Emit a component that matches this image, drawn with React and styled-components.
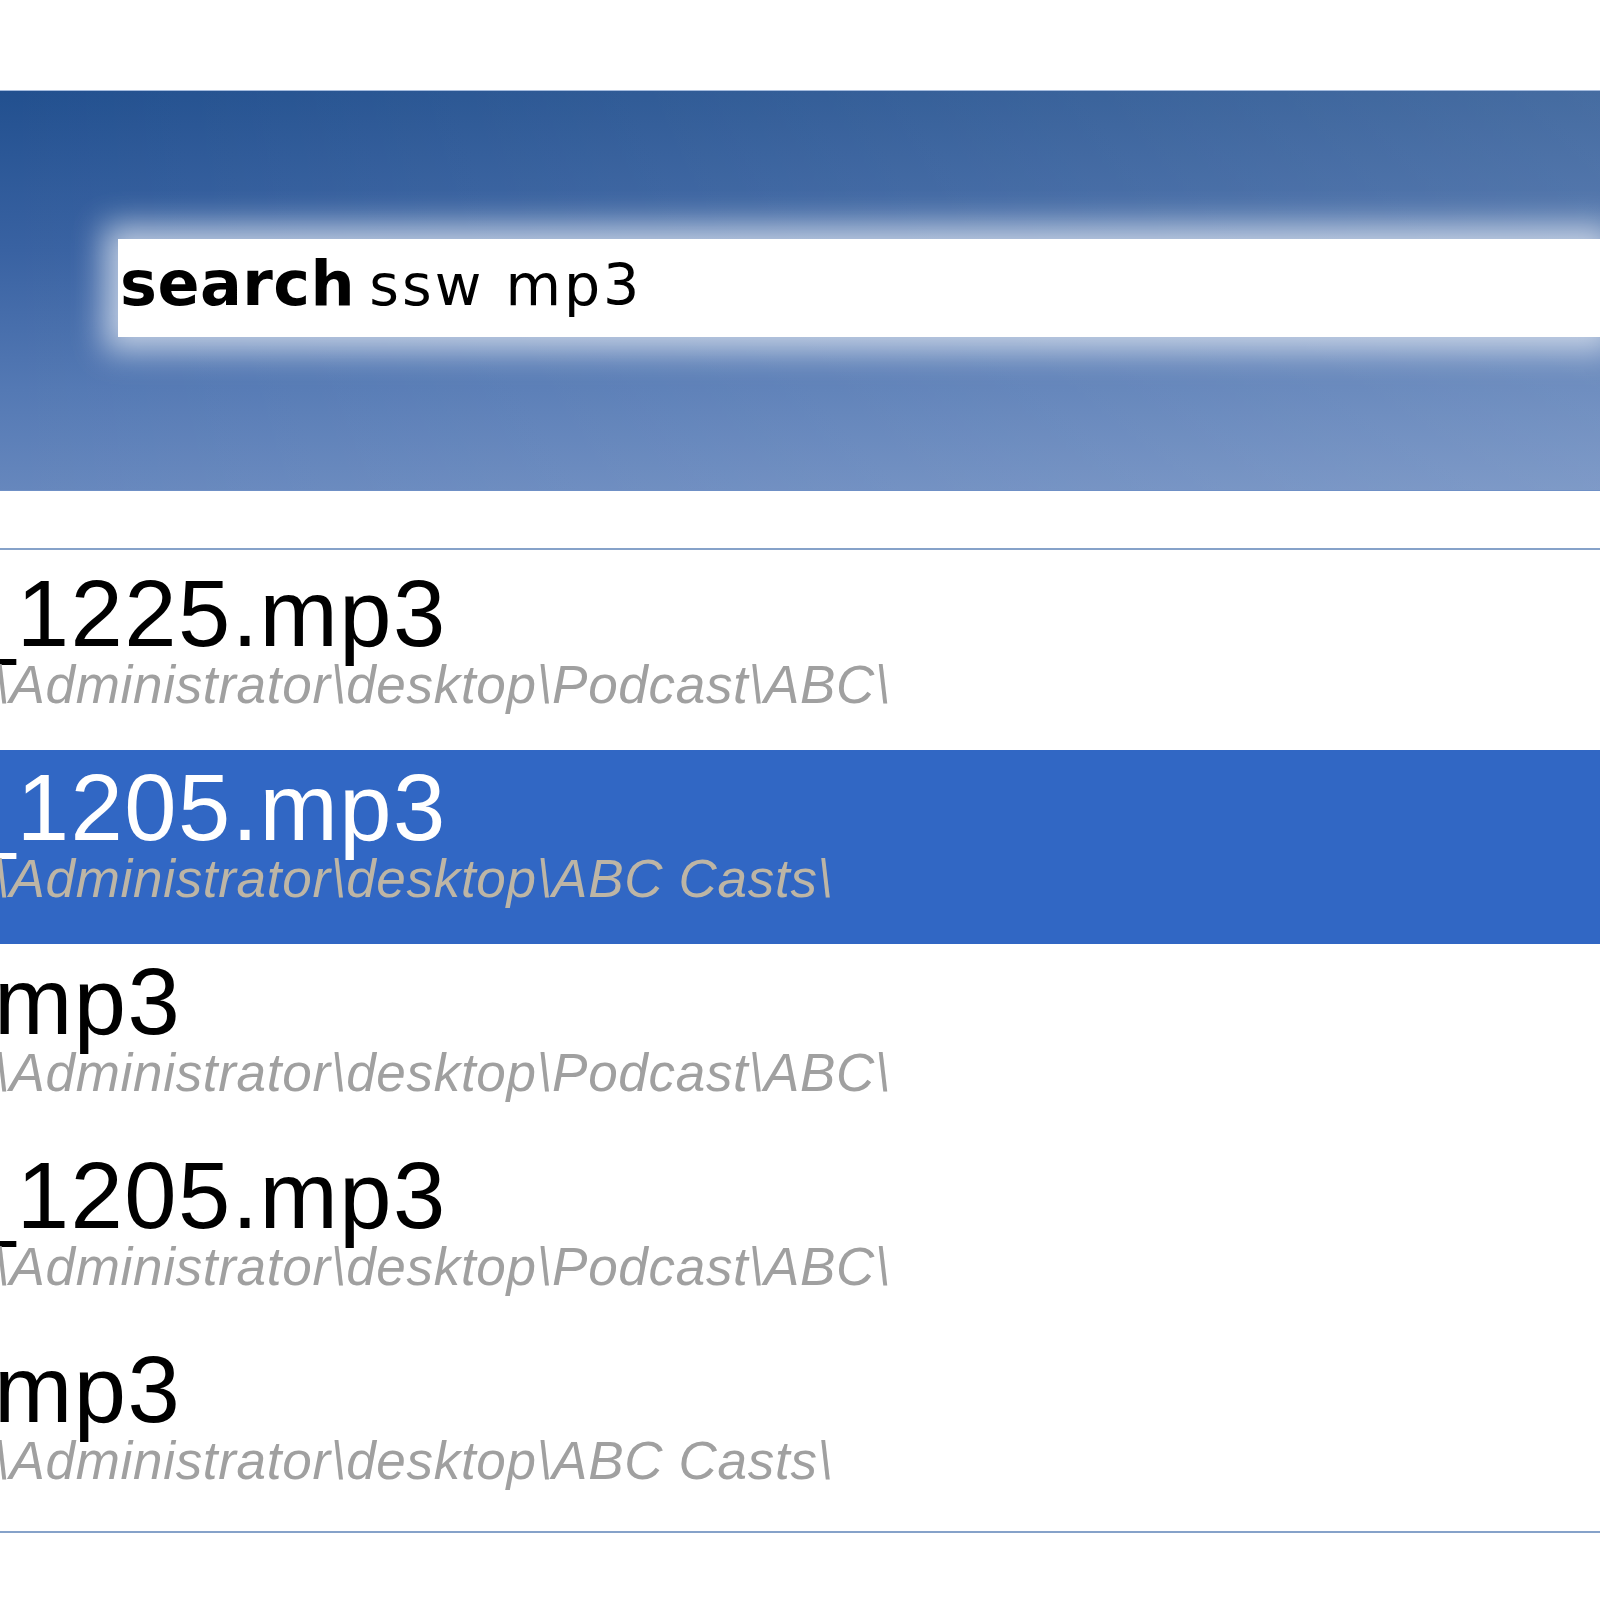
import React from 'react'
import styled, { createGlobalStyle } from 'styled-components'

const GlobalStyle = createGlobalStyle`
  body {
    margin: 0;
    background: #ffffff;
    font-family: "Liberation Sans", Arial, sans-serif;
  }
`

const Page = styled.div`
  width: 1600px;
  height: 1600px;
  padding-top: 90px;
  box-sizing: border-box;
  overflow: hidden;
  background: #ffffff;
`

const Header = styled.div`
  height: 401px;
  box-sizing: border-box;
  padding: 148px 0 0 118px;
  overflow: hidden;
  border-top: 1px solid #a3badd;
  border-bottom: 1px solid #6f90c6;
  background:
    linear-gradient(90deg, rgba(255, 255, 255, 0) 0%, rgba(255, 255, 255, 0.16) 100%),
    linear-gradient(180deg, #22508f 0%, #3962a2 40%, #5479b4 75%, #6687bd 100%);
`

const SearchBox = styled.div`
  height: 98px;
  background: #ffffff;
  padding-left: 2px;
  box-shadow: 0 0 30px 14px rgba(255, 255, 255, 0.65);
  line-height: 90px;
  font-family: "DejaVu Sans", Verdana, sans-serif;
  color: #000000;
  white-space: nowrap;
`

const Command = styled.span`
  font-weight: bold;
  font-size: 62px;
  letter-spacing: 0.5px;
`

const Query = styled.span`
  margin-left: 14px;
  font-size: 57px;
  letter-spacing: 3px;
`

const List = styled.div`
  margin-top: 57px;
  padding: 6px 0 5px;
  border-top: 2px solid #86a2c9;
  border-bottom: 2px solid #86a2c9;
`

const Row = styled.div`
  height: 194px;
  box-sizing: border-box;
  padding-top: 8px;
  overflow: hidden;
  white-space: nowrap;
  background: ${p => (p.$selected ? '#3167c4' : 'transparent')};
`

const Name = styled.div`
  font-size: 94px;
  line-height: 100px;
  letter-spacing: 1.5px;
  margin-left: ${p => p.$shift}px;
  color: ${p => (p.$selected ? '#ffffff' : '#000000')};
`

const Path = styled.div`
  font-size: 53px;
  font-style: italic;
  line-height: 41px;
  letter-spacing: 0.7px;
  margin-left: -6px;
  color: ${p => (p.$selected ? '#bdb5a5' : '#a0a0a0')};
`

const results = [
  { name: '_1225.mp3', shift: -37, path: '\\Administrator\\desktop\\Podcast\\ABC\\' },
  { name: '_1205.mp3', shift: -37, path: '\\Administrator\\desktop\\ABC Casts\\', selected: true },
  { name: 'mp3', shift: -6, path: '\\Administrator\\desktop\\Podcast\\ABC\\' },
  { name: '_1205.mp3', shift: -37, path: '\\Administrator\\desktop\\Podcast\\ABC\\' },
  { name: 'mp3', shift: -6, path: '\\Administrator\\desktop\\ABC Casts\\' }
]

export default function App () {
  return <Page>
    <GlobalStyle />
    <Header>
      <SearchBox>
        <Command>search</Command><Query>ssw mp3</Query>
      </SearchBox>
    </Header>
    <List>
      {results.map((r, i) => (
        <Row key={i} $selected={r.selected}>
          <Name $shift={r.shift} $selected={r.selected}>{r.name}</Name>
          <Path $selected={r.selected}>{r.path}</Path>
        </Row>
      ))}
    </List>
  </Page>
}
